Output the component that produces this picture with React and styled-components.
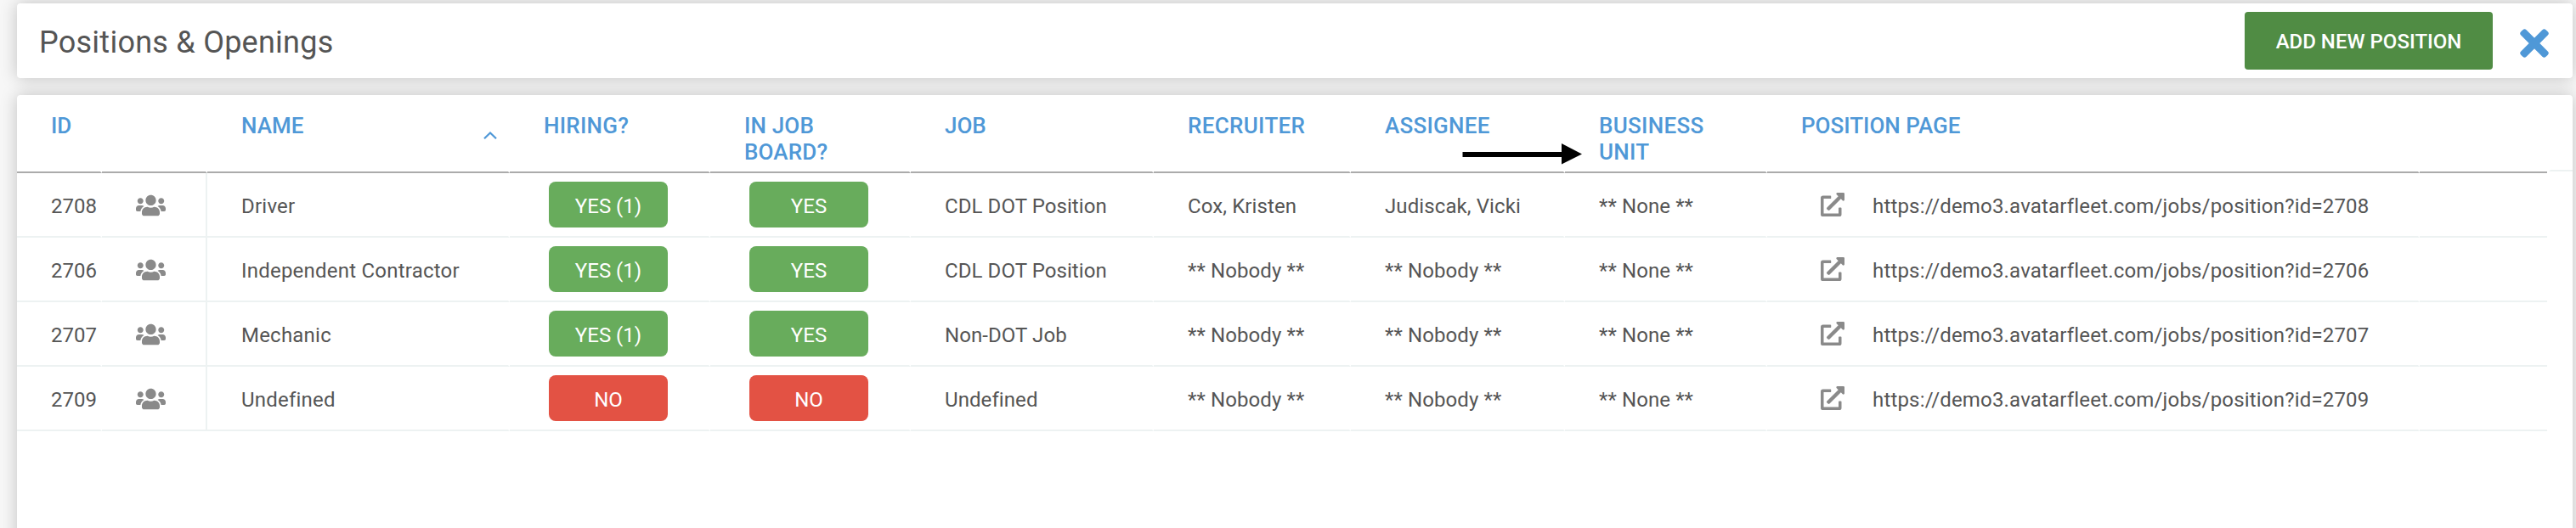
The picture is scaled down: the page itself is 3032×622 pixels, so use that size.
import React from "react";
import styled, { createGlobalStyle, css } from "styled-components";
import { FaUsers, FaExternalLinkAlt } from "react-icons/fa";

const GlobalStyle = createGlobalStyle`
  * { box-sizing: border-box; }
  body {
    margin: 0;
    background: #f7f7f7;
    color: #555;
    font-family: Roboto, "Liberation Sans", sans-serif;
    font-size: 24px;
  }
`;

const Page = styled.main`
  display: flex;
  flex-direction: column;
  gap: 20px;
  height: 100vh;
  padding: 4px 4px 0 20px;
  overflow: hidden;
`;

const Card = styled.section`
  flex: none;
  background: #fff;
  border-radius: 4px;
  box-shadow: 0 0 20px rgba(0, 0, 0, 0.22);
`;

const TitleBar = styled(Card)`
  display: flex;
  align-items: center;
  height: 88px;
  padding: 0 28px 0 26px;
`;

const Title = styled.h1`
  margin: 0 auto 0 0;
  padding-top: 4px;
  font-size: 36px;
  font-weight: 400;
  line-height: 42px;
  letter-spacing: 0.25px;
`;

const AddButton = styled.button`
  width: 292px;
  height: 68px;
  margin-right: 32px;
  padding: 2px 0 0;
  border: 0;
  border-radius: 4px;
  background: #508c44;
  color: #fff;
  font: 500 24px/66px Roboto, "Liberation Sans", sans-serif;
`;

const CloseButton = styled.button`
  display: flex;
  padding: 6px 0 0;
  border: 0;
  background: none;
  color: #4f98d7;

  svg {
    width: 34px;
    height: 34px;
  }
`;

const TableCard = styled(Card)`
  position: relative;
  height: 560px;
`;

const columnTemplate =
  "100px 124px 356px 236px 236px 286px 232px 252px 238px 768px 150px";

const HeaderLine = styled.div`
  display: flex;
  align-items: flex-start;
`;

const HeaderRow = styled.div`
  display: grid;
  grid-template-columns: ${columnTemplate};
  height: 92px;
`;

const ScrollGutter = styled.div`
  flex: 1;
  height: 90px;
  margin-left: 2px;
  border-left: 2px solid #fff;
  border-bottom: 2px solid #edf2f2;
`;

const cellEdges = css`
  border-right: ${(p) => (p.$last ? "0" : "2px solid #fff")};
  padding-left: 40px;
  white-space: nowrap;
`;

const HeaderCell = styled.div`
  ${cellEdges}
  position: relative;
  padding-top: 21px;
  border-bottom: 2px solid #ababab;
  color: #4f98d7;
  font-size: 26px;
  font-weight: 500;
  line-height: 31px;
  letter-spacing: ${(p) => p.$tracking || 0}px;
  white-space: pre-line;
`;

const SortArrow = styled.svg`
  position: absolute;
  right: 12px;
  top: 42px;
  width: 18px;
  height: 12px;
`;

const Row = styled.div`
  display: grid;
  grid-template-columns: ${columnTemplate};
  height: 76px;
`;

const Cell = styled.div`
  ${cellEdges}
  display: flex;
  align-items: center;
  padding-top: 4px;
  border-bottom: 2px solid #edf2f2;
  letter-spacing: ${(p) => p.$tracking || 0}px;
`;

const PeopleCell = styled(Cell)`
  padding-top: 2px;
  border-right-color: #edf2f2;
  color: #8a8a8a;

  svg {
    width: 35px;
    height: 28px;
  }
`;

const BadgeCell = styled(Cell)`
  padding: 0 0 0 46px;
`;

const Badge = styled.span`
  width: 140px;
  height: 54px;
  padding-top: 2px;
  border-radius: 8px;
  background: ${(p) => (p.$on ? "#68ac5c" : "#e35244")};
  color: #fff;
  line-height: 54px;
  text-align: center;
`;

const LinkCell = styled(Cell)`
  svg {
    width: 28px;
    height: 28px;
    margin: -5px 33px 0 23px;
    color: #8a8a8a;
  }
`;

const Pointer = styled.svg`
  position: absolute;
  left: 1701px;
  top: 56px;
  width: 142px;
  height: 26px;
`;

const columns = [
  { label: "ID" },
  { label: "" },
  { label: "NAME", sorted: true },
  { label: "HIRING?", tracking: 0.25 },
  { label: "IN JOB\nBOARD?", tracking: 0.15 },
  { label: "JOB" },
  { label: "RECRUITER", tracking: 0.33 },
  { label: "ASSIGNEE", tracking: 0.25 },
  { label: "BUSINESS\nUNIT", tracking: 0.3 },
  { label: "POSITION PAGE" },
  { label: "" },
];

const positions = [
  { id: 2708, name: "Driver", hiring: "YES (1)", board: "YES", job: "CDL DOT Position", recruiter: "Cox, Kristen", assignee: "Judiscak, Vicki" },
  { id: 2706, name: "Independent Contractor", hiring: "YES (1)", board: "YES", job: "CDL DOT Position", recruiter: "** Nobody **", assignee: "** Nobody **" },
  { id: 2707, name: "Mechanic", hiring: "YES (1)", board: "YES", job: "Non-DOT Job", recruiter: "** Nobody **", assignee: "** Nobody **" },
  { id: 2709, name: "Undefined", hiring: "NO", board: "NO", job: "Undefined", recruiter: "** Nobody **", assignee: "** Nobody **" },
];

function CloseIcon() {
  return (
    <svg viewBox="-17 -17 34 34" fill="currentColor">
      <rect x="-20.8" y="-4.5" width="41.6" height="9" rx="3" transform="rotate(45)" />
      <rect x="-20.8" y="-4.5" width="41.6" height="9" rx="3" transform="rotate(-45)" />
    </svg>
  );
}

function StatusCell({ value }) {
  return (
    <BadgeCell>
      <Badge $on={value !== "NO"}>{value}</Badge>
    </BadgeCell>
  );
}

function PositionRow({ position: p }) {
  return (
    <Row>
      <Cell>{p.id}</Cell>
      <PeopleCell><FaUsers /></PeopleCell>
      <Cell $tracking={0.22}>{p.name}</Cell>
      <StatusCell value={p.hiring} />
      <StatusCell value={p.board} />
      <Cell $tracking={0.08}>{p.job}</Cell>
      <Cell $tracking={0.1}>{p.recruiter}</Cell>
      <Cell $tracking={0.1}>{p.assignee}</Cell>
      <Cell $tracking={0.1}>** None **</Cell>
      <LinkCell $tracking={0.18}>
        <FaExternalLinkAlt />
        https://demo3.avatarfleet.com/jobs/position?id={p.id}
      </LinkCell>
      <Cell $last />
    </Row>
  );
}

export default function App() {
  return (
    <>
      <GlobalStyle />
      <Page>
        <TitleBar>
          <Title>Positions &amp; Openings</Title>
          <AddButton>ADD NEW POSITION</AddButton>
          <CloseButton aria-label="Close"><CloseIcon /></CloseButton>
        </TitleBar>
        <TableCard>
          <HeaderLine>
            <HeaderRow>
              {columns.map((c, i) => (
                <HeaderCell key={i} $tracking={c.tracking} $last={i === columns.length - 1}>
                  {c.label}
                  {c.sorted && (
                    <SortArrow viewBox="0 0 18 12">
                      <path d="M2 9.3 9 2.5 16 9.3" fill="none" stroke="#4f98d7" strokeWidth="2.2" />
                    </SortArrow>
                  )}
                </HeaderCell>
              ))}
            </HeaderRow>
            <ScrollGutter />
          </HeaderLine>
          {positions.map((p) => (
            <PositionRow key={p.id} position={p} />
          ))}
          <Pointer viewBox="0 0 142 26">
            <path d="M0.5 11H117V1L141 13.5L117 25.5V17H0.5Z" fill="#000" />
          </Pointer>
        </TableCard>
      </Page>
    </>
  );
}
